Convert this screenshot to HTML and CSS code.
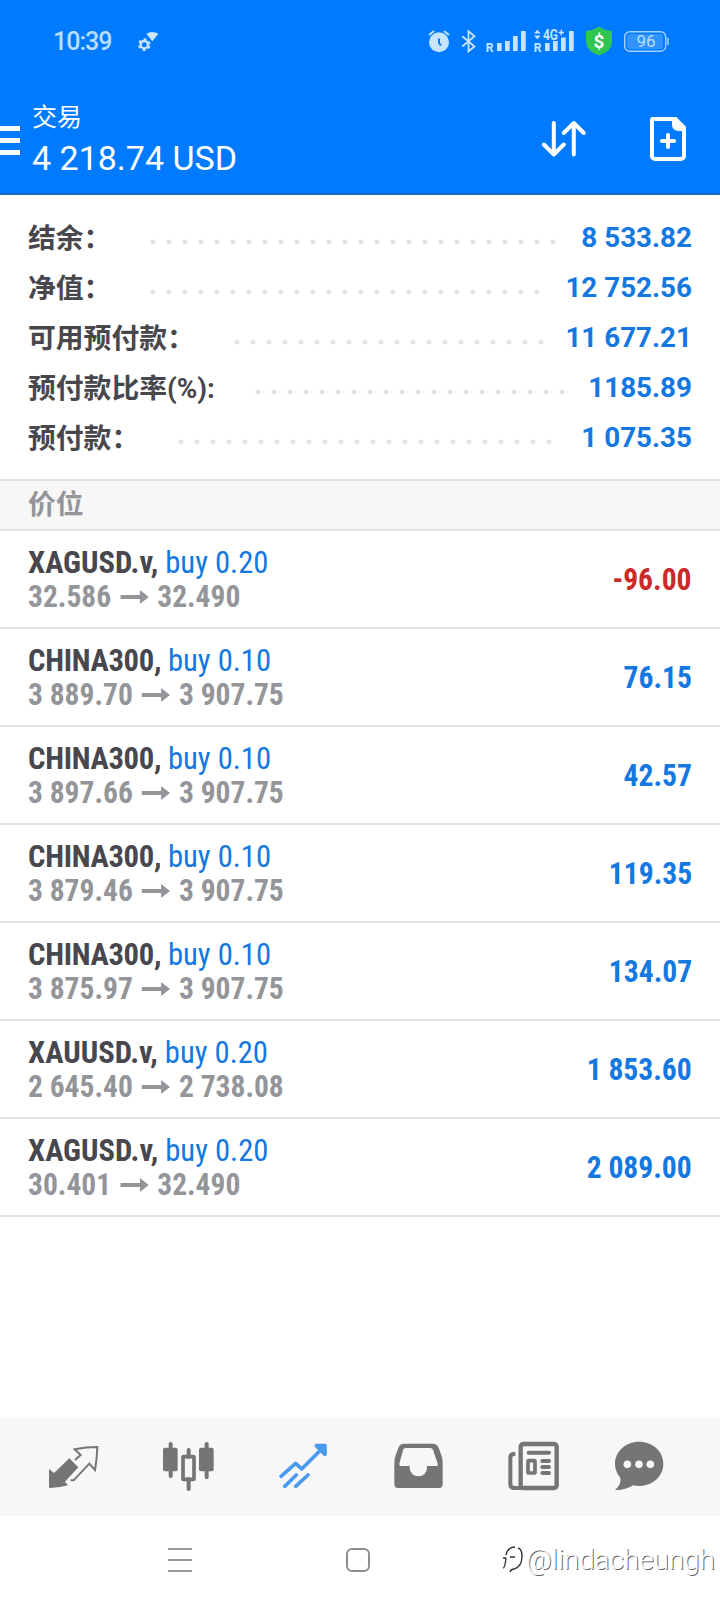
FILE: index.html
```html
<!DOCTYPE html>
<html lang="zh-CN">
<head>
<meta charset="utf-8">
<title>交易</title>
<link rel="stylesheet" href="styles.css">
</head>
<body>
<svg class="defs" width="0" height="0"><defs>
  <symbol id="arrow" viewBox="0 0 29 14" preserveAspectRatio="none"><path d="M0 5h20V0l9 7-9 7V9H0z" fill="#949599"/></symbol>
</defs></svg>
<header class="header">
  <div class="status">
    <span class="time">10:39</span>
    <svg class="wifi-gear" width="24" height="24" viewBox="408 90 72 72">
      <path d="M436 101q18-10 36 0l-18 23z" fill="#cde6ff"/>
      <circle cx="430" cy="134" r="11" fill="none" stroke="#cde6ff" stroke-width="7"/>
      <circle cx="430" cy="134" r="16" fill="none" stroke="#cde6ff" stroke-width="6" stroke-dasharray="8.4 8.35" stroke-dashoffset="-4.2"/>
    </svg>
    <svg class="indicators" width="260" height="80" viewBox="420 0 260 80">
      <g fill="#c6e4ff">
        <circle cx="439" cy="42.3" r="10"/>
        <path d="M429 35l5-4M444 31l5 4" stroke="#c6e4ff" stroke-width="2"/>
        <path d="M439 38.5v4.5l2 2.5" fill="none" stroke="#007aff" stroke-width="2"/>
        <path d="M462.3 36.3l12.2 10.2-6 4.8V31.2l6 5.1-12.2 10.2" fill="none" stroke="#c6e4ff" stroke-width="1.8"/>
        <path d="M497 43h4.7v8H497zM505 41h4.7v10H505zM513 36h4.7v15H513zM521 31h4.7v20H521z"/>
        <path d="M545 43h4.7v8H545zM553 41h4.7v10H553zM561 37.5h4.7V51H561zM569 31h4.7v20H569z"/>
        <path d="M537.3 29.8l3.4 3.8h-6.8zM537.3 39.2l3.4-3.8h-6.8z"/>
        <path d="M561.3 29.8v5.4M558.6 32.5h5.4" stroke="#c6e4ff" stroke-width="1.5"/>
        <text class="sim" x="485.7" y="52">R</text>
        <text class="sim" x="533.7" y="52">R</text>
        <text class="net" x="543" y="40" textLength="15" lengthAdjust="spacingAndGlyphs">4G</text>
      </g>
      <path d="M599 26.5q6 4 13 4.5v11q0 9-13 13.5-13-4.5-13-13.5V31q7-.5 13-4.5z" fill="#30c552"/>
      <text class="dollar" x="599" y="47.5">$</text>
      <rect x="624.7" y="31.7" width="41" height="19.6" rx="5" fill="none" stroke="#9fd0ff" stroke-width="1.5"/>
      <rect x="627" y="34" width="36" height="15" rx="3" fill="#3094ff"/>
      <path d="M668 38v7" stroke="#9fd0ff" stroke-width="1.6"/>
      <text class="battery" x="646" y="47.3">96</text>
    </svg>
  </div>
  <div class="bar">
    <div class="menu"><i></i><i></i><i></i></div>
    <div class="titles">
      <div class="title">交易</div>
      <div class="amount">4 218.74 USD</div>
    </div>
    <svg class="sort" width="48" height="48" viewBox="540 115 48 48" fill="none" stroke="#fff" stroke-width="4" stroke-linecap="round" stroke-linejoin="round">
      <path d="M553.8 123v31.5M543.8 144.5l10 10 10-10M573.8 154.5V123M563.8 133l10-10 10 10"/>
    </svg>
    <svg class="new-order" width="48" height="48" viewBox="644 115 48 48">
      <path d="M653 119h22.5l8.5 8.5V156a3 3 0 0 1-3 3h-26a3 3 0 0 1-3-3v-36q0-1 1-1z" fill="none" stroke="#fff" stroke-width="4"/>
      <path d="M672 119h5l8 8v4h-7q-6-1-6-6z" fill="#fff"/>
      <path d="M668 135v12M662 141h12" stroke="#fff" stroke-width="4" stroke-linecap="round"/>
    </svg>
  </div>
</header>
<main>
  <section class="summary">
    <div class="line"><span class="label two">结余：</span><i class="dots" style="width:416px"></i><b>8 533.82</b></div>
    <div class="line"><span class="label two">净值：</span><i class="dots" style="width:400px"></i><b>12 752.56</b></div>
    <div class="line"><span class="label five">可用预付款：</span><i class="dots" style="width:320px"></i><b>11 677.21</b></div>
    <div class="line"><span class="label ratio">预付款比率(%):</span><i class="dots" style="width:320px"></i><b>1185.89</b></div>
    <div class="line"><span class="label three">预付款：</span><i class="dots" style="width:384px"></i><b>1 075.35</b></div>
  </section>
  <h2 class="section-title">价位</h2>
  <section class="positions">
    <div class="row"><div><div class="symbol">XAGUSD.v, <span>buy 0.20</span></div><div class="prices">32.586<svg class="arrow"><use href="#arrow"/></svg>32.490</div></div><div class="profit loss">-96.00</div></div>
    <div class="row"><div><div class="symbol index">CHINA300, <span>buy 0.10</span></div><div class="prices">3 889.70<svg class="arrow"><use href="#arrow"/></svg>3 907.75</div></div><div class="profit">76.15</div></div>
    <div class="row"><div><div class="symbol index">CHINA300, <span>buy 0.10</span></div><div class="prices">3 897.66<svg class="arrow"><use href="#arrow"/></svg>3 907.75</div></div><div class="profit">42.57</div></div>
    <div class="row"><div><div class="symbol index">CHINA300, <span>buy 0.10</span></div><div class="prices">3 879.46<svg class="arrow"><use href="#arrow"/></svg>3 907.75</div></div><div class="profit">119.35</div></div>
    <div class="row"><div><div class="symbol index">CHINA300, <span>buy 0.10</span></div><div class="prices">3 875.97<svg class="arrow"><use href="#arrow"/></svg>3 907.75</div></div><div class="profit">134.07</div></div>
    <div class="row"><div><div class="symbol">XAUUSD.v, <span>buy 0.20</span></div><div class="prices">2 645.40<svg class="arrow"><use href="#arrow"/></svg>2 738.08</div></div><div class="profit">1 853.60</div></div>
    <div class="row"><div><div class="symbol">XAGUSD.v, <span>buy 0.20</span></div><div class="prices">30.401<svg class="arrow"><use href="#arrow"/></svg>32.490</div></div><div class="profit">2 089.00</div></div>
  </section>
</main>
<nav class="tabs">
  <svg viewBox="132 84 180 180">
    <path d="M208 145l27 27-40 43 9 11q-26 8-54 8-3 0-3-4v-51q0-3 3 0l12 10z" fill="#757575"/>
    <path d="M225 150l17-15-18-17q35-7 68-7-1 35-7 69l-17-19-47 50h-9" fill="none" stroke="#757575" stroke-width="6"/>
  </svg>
  <svg viewBox="477 84 180 180">
    <g fill="#757575"><rect x="489" y="113" width="44" height="71" rx="6"/><rect x="597" y="113" width="44" height="71" rx="6"/></g>
    <path d="M512 102v96M620 102v100M566 120v20M566 208v29" stroke="#757575" stroke-width="12" stroke-linecap="round"/>
    <rect x="549" y="140" width="33" height="68" rx="2" fill="none" stroke="#757575" stroke-width="11"/>
  </svg>
  <svg viewBox="819 84 180 180" fill="none" stroke="#4a9bf0" stroke-width="11" stroke-linecap="round" stroke-linejoin="round">
    <path d="M843 199l44-39 18 17 66-66M854 229l35-34M887 229l37-34"/><path d="M949 107h26v26z" fill="#4a9bf0"/>
  </svg>
  <svg viewBox="84 84 180 180">
    <path fill="#757575" fill-rule="evenodd" d="M133 101h85q12 0 17 10l10 27q3 9 3 20v65q0 11-11 11H114q-11 0-11-11v-65q0-11 4-22l9-25q5-10 17-10zm4 13q-6 0-8 6l-11 41q-1 7 5 7h26v6a26 25 0 0 0 52 0v-6h27q7 0 5-7l-14-42q-2-5-8-5z"/>
  </svg>
  <svg viewBox="432 84 180 180">
    <rect x="482" y="102" width="108" height="132" rx="8" fill="none" stroke="#757575" stroke-width="13"/>
    <path d="M466 132h-4q-11 0-11 11v79q0 12 12 12h28" fill="none" stroke="#757575" stroke-width="12"/>
    <path d="M506 128h61M547 153h20M547 171h20M547 189h20" stroke="#757575" stroke-width="12" stroke-linecap="round"/>
    <rect x="504" y="152" width="21" height="37" rx="2" fill="none" stroke="#757575" stroke-width="11"/>
  </svg>
  <svg viewBox="747 84 180 180">
    <path d="M837 95c42 0 73 29 73 67s-34 67-75 66q-9 0-15-2-24 15-55 14 20-17 16-37-16-18-16-41c0-38 32-67 72-67z" fill="#757575"/>
    <g fill="#f7f7f7"><circle cx="802" cy="163" r="11.5"/><circle cx="837" cy="163" r="11.5"/><circle cx="871" cy="163" r="11.5"/></g>
  </svg>
</nav>
<footer class="system-nav">
  <div class="recents"><i></i><i></i><i></i></div>
  <div class="home"></div>
  <div class="signature">
    <svg width="26" height="30" viewBox="0 0 26 30" fill="none" stroke="#333" stroke-width="1.4"><path d="M3 23q2 0 3-10M3 13h3M6 10q2-8 9-8M10 12h5M8 20M18 3q4 1 4 8 0 11-8 13-3 0-4 3"/></svg>
    <span>@lindacheungh</span>
  </div>
</footer>
</body>
</html>
```

FILE: styles.css
```css
* { box-sizing: border-box; }
body {
  margin: 0;
  width: 720px;
  height: 1604px;
  display: flex;
  flex-direction: column;
  overflow: hidden;
  background: #fff;
  font-family: Roboto, "Noto Sans CJK SC", sans-serif;
}
svg { display: block; flex: none; }
.defs { position: absolute; }

.header {
  height: 195px;
  flex: none;
  background: #007aff;
  border-bottom: 2px solid #1a6cc0;
}
.status { height: 80px; display: flex; align-items: flex-start; padding-left: 53px; }
.time {
  width: 84px;
  padding-top: 28px;
  font: 500 25px/28px Roboto, sans-serif;
  letter-spacing: -1px;
  color: #b9deff;
  white-space: nowrap;
}
.wifi-gear { margin-top: 30px; margin-right: 259px; }
.sim { font: 700 12px Roboto, sans-serif; }
.net { font: 700 15px Roboto, sans-serif; }
.dollar { font: 700 19px Roboto, sans-serif; fill: #fff; text-anchor: middle; }
.battery { font: 400 17px Roboto, sans-serif; fill: #b9deff; text-anchor: middle; }

.bar { display: flex; align-items: flex-start; height: 113px; color: #fff; }
.menu { width: 20px; margin: 46px 12px 0 0; display: grid; gap: 7px; }
.menu i { height: 5px; background: #fff; }
.titles { width: 508px; padding-top: 20px; }
.title { font-size: 25px; line-height: 36px; height: 36px; }
.amount { font-size: 34px; line-height: 40px; margin-top: 2px; }
.sort { margin-top: 35px; }
.new-order { margin: 35px 0 0 56px; }

.summary { height: 284px; padding: 18px 28px 0; }
.line { display: flex; height: 50px; line-height: 50px; align-items: flex-start; white-space: nowrap; }
.label { flex: none; padding-top: 1px; font-size: 27.8px; font-weight: 700; color: #47474d; }
.two { width: 117px; }
.three { width: 145px; }
.five { width: 201px; }
.ratio { width: 222px; }
.dots {
  flex: none;
  height: 6px;
  margin-top: 26px;
  background: radial-gradient(circle at 8px 3px, #e3e3e5 2.2px, transparent 2.9px) 0 0 / 16px 6px;
}
.line b { margin-left: auto; font-size: 27.8px; font-weight: 700; color: #1478e0; }

.section-title {
  margin: 0;
  height: 52px;
  padding: 0 28px;
  border: solid #e2e2e3;
  border-width: 2px 0;
  background: #f7f7f7;
  font-size: 27.8px;
  font-weight: 700;
  line-height: 48px;
  color: #949599;
}
.row {
  height: 98px;
  padding: 14px 28px 0;
  border-bottom: 2px solid #e2e2e3;
  display: flex;
  justify-content: space-between;
  font-family: "Roboto Condensed", Roboto, sans-serif;
  font-stretch: 75%;
  font-size: 32px;
  line-height: 34px;
  font-weight: 700;
  white-space: nowrap;
}
.symbol { color: #47474d; transform: scaleX(.957); transform-origin: left; }
.symbol.index { letter-spacing: -.3px; }
.symbol span { color: #1478e0; font-weight: 400; letter-spacing: 0; }
.prices {
  color: #949599;
  display: flex;
  align-items: center;
  transform: scaleX(.922);
  transform-origin: left;
}
.arrow { width: 31px; height: 14px; margin: 2px 9.5px 0; }
.profit { color: #1478e0; padding-top: 17px; transform: scaleX(.924); transform-origin: right; }
.loss { color: #cc2929; }

.tabs {
  margin-top: auto;
  height: 98px;
  flex: none;
  padding: 20px 0 0 44px;
  background: #f7f7f7;
  display: grid;
  grid-template-columns: 115px 114px 115px 116px 105px 60px;
}
.tabs svg { width: 60px; height: 60px; }

.system-nav { height: 88px; flex: none; display: flex; align-items: flex-start; padding-left: 168px; }
.recents { flex: none; width: 24px; margin: 32px 154px 0 0; display: grid; gap: 9px; }
.recents i { height: 2px; background: #9a9a9a; }
.home { flex: none; width: 24px; height: 24px; margin-top: 32px; border: 2px solid #8d8d8d; border-radius: 6px; }
.signature { flex: none; display: flex; margin: 29px 0 0 130px; color: #fff; }
.signature span {
  font: 300 28px/30px Roboto, sans-serif;
  letter-spacing: -.1px;
  text-shadow: 1px 1px 0 #666;
  white-space: nowrap;
}
```
